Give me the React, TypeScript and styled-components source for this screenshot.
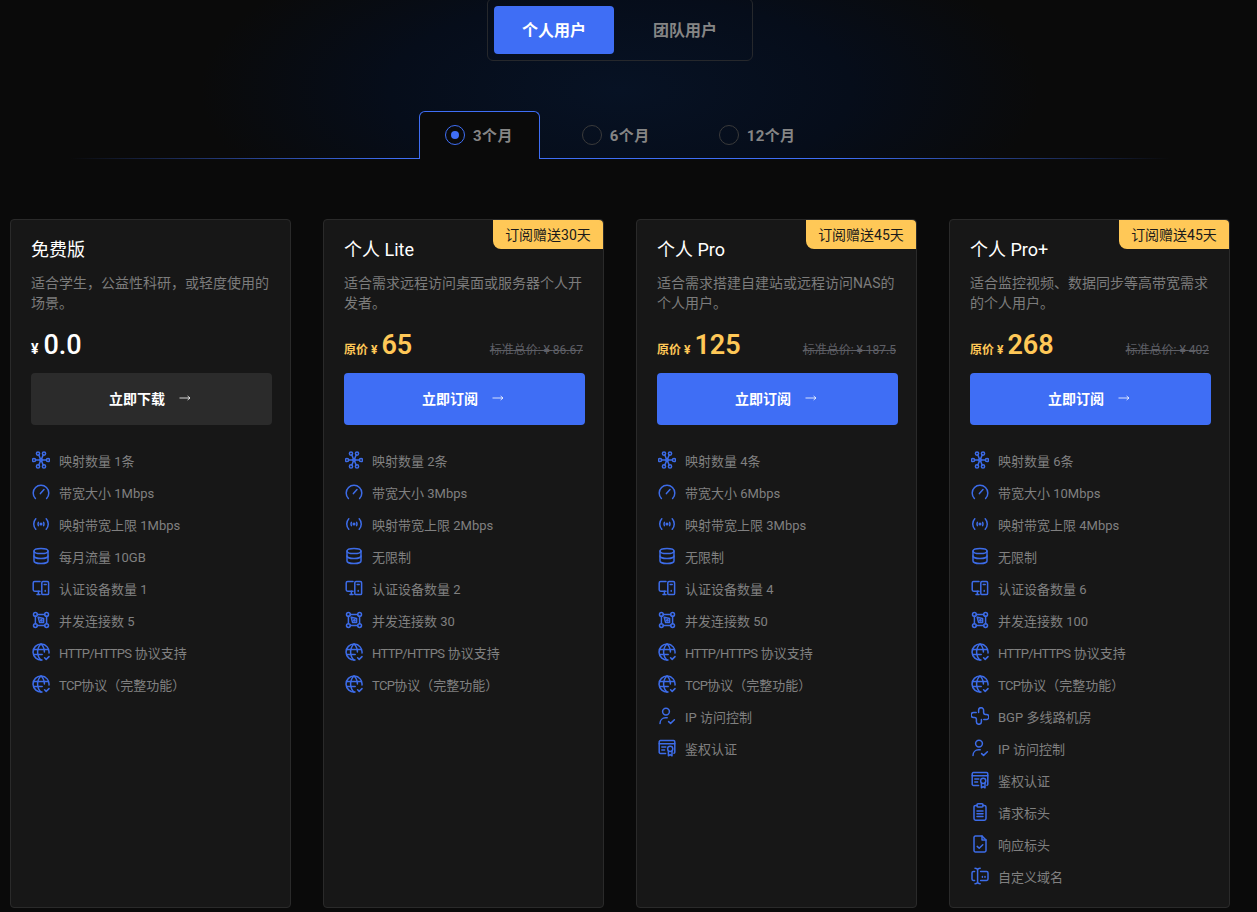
import React, { useState } from 'react';
import styled, { createGlobalStyle } from 'styled-components';

const BLUE = '#3f6ef5';
const ICON = '#3d6ce8';
const GOLD = '#ffc857';
const FONT = '"Roboto", "Noto Sans CJK SC", sans-serif';

const GlobalStyle = createGlobalStyle`
  * { box-sizing: border-box; }
  html, body { margin: 0; padding: 0; background: #0a0a0a; }
  body {
    font-family: ${FONT};
    overflow: hidden;
  }
`;

type IconName = 'nodes' | 'gauge' | 'signal' | 'db' | 'devices' | 'square' | 'globe' | 'cross' | 'user' | 'cert' | 'clip' | 'file' | 'cursor';

const paths: Record<IconName, React.ReactNode> = {
  nodes: (
    <>
      <circle cx="6" cy="2.6" r="1.6" /><circle cx="12" cy="2.6" r="1.6" />
      <circle cx="2" cy="9" r="1.6" /><circle cx="16" cy="9" r="1.6" />
      <circle cx="6" cy="15.4" r="1.6" /><circle cx="12" cy="15.4" r="1.6" />
      <circle cx="9" cy="9" r="1.2" />
      <path d="M6.8 4 8.4 7.8M11.2 4 9.6 7.8M3.6 9h4.2M14.4 9h-4.2M6.8 14 8.4 10.2M11.2 14 9.6 10.2" />
    </>
  ),
  gauge: (
    <>
      <path d="M3.4 15.4A7.8 7.8 0 1 1 14.6 15.4" />
      <path d="M8.4 10.6 12 6.6" />
    </>
  ),
  signal: (
    <>
      <circle cx="9" cy="9" r="0.8" fill={ICON} />
      <path d="M6.4 7.4a3.4 3.4 0 0 0 0 3.2M11.6 7.4a3.4 3.4 0 0 1 0 3.2" />
      <path d="M3.8 3.8a7.6 7.6 0 0 0 0 10.4M14.2 3.8a7.6 7.6 0 0 1 0 10.4" />
    </>
  ),
  db: (
    <>
      <ellipse cx="9" cy="4" rx="7" ry="2.6" />
      <path d="M2 4v10c0 1.4 3.1 2.6 7 2.6s7-1.2 7-2.6V4" />
      <path d="M2 9c0 1.4 3.1 2.6 7 2.6s7-1.2 7-2.6" />
    </>
  ),
  devices: (
    <>
      <path d="M8 2.6H2.6a1.4 1.4 0 0 0-1.4 1.4v6.8a1.4 1.4 0 0 0 1.4 1.4H8" />
      <path d="M5 15.6h3M6.4 12.2v3.4" />
      <rect x="9.8" y="2.6" width="6.8" height="13" rx="1.2" />
      <path d="M13.2 11.4v.8M12.2 5.6h2" />
    </>
  ),
  square: (
    <>
      <circle cx="3.4" cy="3.4" r="1.9" /><circle cx="14.6" cy="3.4" r="1.9" />
      <circle cx="3.4" cy="14.6" r="1.9" /><circle cx="14.6" cy="14.6" r="1.9" />
      <path d="M5.3 3.4h7.4M5.3 14.6h7.4M3.4 5.3v7.4M14.6 5.3v7.4" />
      <path d="M6.2 6.2 11.6 7.6 11.6 11.6 7.6 11.6Z" />
      <circle cx="9.4" cy="9.4" r="0.7" />
    </>
  ),
  globe: (
    <>
      <path d="M17 10A8 8 0 1 0 10 17" />
      <path d="M1.6 6.4h14.8M1.6 11.4h8.6" />
      <path d="M9 1C6.6 3.2 5.6 6 5.6 9c0 3 1 5.8 3.4 8M9 1c2.4 2.2 3.4 5 3.4 8" />
      <path d="m12.6 14.8 1.6 1.6 2.8-2.8" />
    </>
  ),
  cross: (
    <>
      <path d="M7.6 5.6V3.2a2.5 2.5 0 0 1 5 0v2.4c0 1.2.6 1.8 1.8 1.8h1a2.5 2.5 0 0 1 0 5H12.8" />
      <path d="M10.4 12.4v2.4a2.5 2.5 0 0 1-5 0v-2.4c0-1.2-.6-1.8-1.8-1.8h-1a2.5 2.5 0 0 1 0-5H5.2" />
    </>
  ),
  user: (
    <>
      <circle cx="8" cy="4.6" r="3.4" />
      <path d="M2 16.6c0-3.4 2.4-5.8 5.6-5.8h1.6" />
      <path d="m10.6 14.6 2 1.8 3.8-3.6" />
    </>
  ),
  cert: (
    <>
      <path d="M7.6 14.4H2.4a1.2 1.2 0 0 1-1.2-1.2V2.8a1.2 1.2 0 0 1 1.2-1.2h13.2a1.2 1.2 0 0 1 1.2 1.2v10.4a1.2 1.2 0 0 1-.8 1.1" />
      <path d="M1.2 4.8h15.6M3.8 8h4M3.8 11h2.8" />
      <circle cx="12.2" cy="9.8" r="2.6" />
      <path d="M10.4 12v4.8l1.8-1.2 1.8 1.2V12" />
    </>
  ),
  clip: (
    <>
      <rect x="6" y="0.8" width="6" height="3.2" rx="1" />
      <path d="M12 2.4h1.4A1.6 1.6 0 0 1 15 4v11.6a1.6 1.6 0 0 1-1.6 1.6H4.6A1.6 1.6 0 0 1 3 15.6V4a1.6 1.6 0 0 1 1.6-1.6H6" />
      <path d="M6 8h6M6 10.8h6M6 13.6h6" />
    </>
  ),
  file: (
    <>
      <path d="M11 1H4.4A1.4 1.4 0 0 0 3 2.4v13.2A1.4 1.4 0 0 0 4.4 17h9.2a1.4 1.4 0 0 0 1.4-1.4V5z" />
      <path d="M11 1v4h4" />
      <path d="m6.2 11.4 2 1.8 3.6-3.4" />
    </>
  ),
  cursor: (
    <>
      <path d="M3.6 4.6H2.4A1.4 1.4 0 0 0 1 6v6a1.4 1.4 0 0 0 1.4 1.4h1.2" />
      <path d="M9.6 4.6h6A1.4 1.4 0 0 1 17 6v6a1.4 1.4 0 0 1-1.4 1.4h-6" />
      <path d="M4 1.2c1.6 0 2.6.8 2.6 2v11.6c0 1.2-1 2-2.6 2M9.2 1.2c-1.6 0-2.6.8-2.6 2M9.2 16.8c-1.6 0-2.6-.8-2.6-2" />
      <path d="M11.4 9.6v.6M14 9.6v.6" />
    </>
  ),
};

function FeatureIcon({ name }: { name: IconName }) {
  return <IconSvg viewBox="0 0 18 18">{paths[name]}</IconSvg>;
}

type Feature = { icon: IconName; text: string; proto?: string };

const base = (n: string, bw: string, cap: string, traffic: string, dev: string, conn: string): Feature[] => [
  { icon: 'nodes', text: `映射数量 ${n}条` },
  { icon: 'gauge', text: `带宽大小 ${bw}Mbps` },
  { icon: 'signal', text: `映射带宽上限 ${cap}Mbps` },
  { icon: 'db', text: traffic },
  { icon: 'devices', text: `认证设备数量 ${dev}` },
  { icon: 'square', text: `并发连接数 ${conn}` },
  { icon: 'globe', proto: 'HTTP/HTTPS', text: ' 协议支持' },
  { icon: 'globe', proto: 'TCP', text: '协议（完整功能）' },
];

const plans = [
  {
    title: '免费版',
    desc: '适合学生，公益性科研，或轻度使用的场景。',
    price: '0.0',
    cta: '立即下载',
    features: base('1', '1', '1', '每月流量 10GB', '1', '5'),
  },
  {
    title: '个人 Lite',
    badge: '订阅赠送30天',
    desc: '适合需求远程访问桌面或服务器个人开发者。',
    price: '65',
    list: '86.67',
    cta: '立即订阅',
    features: base('2', '3', '2', '无限制', '2', '30'),
  },
  {
    title: '个人 Pro',
    badge: '订阅赠送45天',
    desc: '适合需求搭建自建站或远程访问NAS的个人用户。',
    price: '125',
    list: '187.5',
    cta: '立即订阅',
    features: [
      ...base('4', '6', '3', '无限制', '4', '50'),
      { icon: 'user', text: 'IP 访问控制' },
      { icon: 'cert', text: '鉴权认证' },
    ] as Feature[],
  },
  {
    title: '个人 Pro+',
    badge: '订阅赠送45天',
    desc: '适合监控视频、数据同步等高带宽需求的个人用户。',
    price: '268',
    list: '402',
    cta: '立即订阅',
    features: [
      ...base('6', '10', '4', '无限制', '6', '100'),
      { icon: 'cross', text: 'BGP 多线路机房' },
      { icon: 'user', text: 'IP 访问控制' },
      { icon: 'cert', text: '鉴权认证' },
      { icon: 'clip', text: '请求标头' },
      { icon: 'file', text: '响应标头' },
      { icon: 'cursor', text: '自定义域名' },
    ] as Feature[],
  },
];

export default function App() {
  const [group, setGroup] = useState('个人用户');
  const [term, setTerm] = useState('3个月');

  return (
    <Page>
      <GlobalStyle />
      <Hero>
        <Switcher>
          {['个人用户', '团队用户'].map((g) => (
            <SwitchButton key={g} $active={g === group} onClick={() => setGroup(g)}>{g}</SwitchButton>
          ))}
        </Switcher>
        <Tabs>
          {['3个月', '6个月', '12个月'].map((t) => (
            <Tab key={t} $active={t === term} onClick={() => setTerm(t)}>
              <Radio $active={t === term} />
              <TabLabel>{t}</TabLabel>
            </Tab>
          ))}
        </Tabs>
      </Hero>

      <Cards>
        {plans.map((p) => (
          <Card key={p.title}>
            {p.badge && <Badge>{p.badge}</Badge>}
            <Title>{p.title}</Title>
            <Desc>{p.desc}</Desc>
            <PriceRow>
              <PriceLeft>
                {p.list ? <Original>原价 ¥</Original> : <Yen>¥</Yen>}
                <Amount $free={!p.list}>{p.price}</Amount>
              </PriceLeft>
              {p.list && <ListPrice>标准总价: ¥ {p.list}</ListPrice>}
            </PriceRow>
            <Cta $free={!p.list}>
              {p.cta}
              <ArrowSvg viewBox="0 0 12 8">
                <path d="M0.5 4h10.5M8.6 2 11 4 8.6 6" />
              </ArrowSvg>
            </Cta>
            <Features>
              {p.features.map((f) => (
                <FeatureRow key={(f.proto ?? '') + f.text}>
                  <FeatureIcon name={f.icon} />
                  <span>
                    {f.proto && <Proto>{f.proto}</Proto>}
                    {f.text}
                  </span>
                </FeatureRow>
              ))}
            </Features>
          </Card>
        ))}
      </Cards>
    </Page>
  );
}

const Page = styled.div`
  width: 1257px;
  height: 912px;
  overflow: hidden;
  background: #0a0a0a;
`;

const Hero = styled.div`
  height: 159px;
  display: flex;
  flex-direction: column;
  align-items: flex-start;
  background: radial-gradient(ellipse 420px 170px at 620px 90px, #071224 0%, #060d1a 55%, #0a0a0a 100%);
  position: relative;

  &::after {
    content: '';
    position: absolute;
    left: 70px;
    width: 1100px;
    bottom: 0;
    height: 1px;
    background: linear-gradient(90deg, transparent 0%, ${BLUE} 30%, ${BLUE} 70%, transparent 100%);
  }
`;

const Switcher = styled.div`
  margin: -2px 0 0 487px;
  width: 266px;
  height: 63px;
  border: 1px solid #26282c;
  border-radius: 6px;
  padding: 7px 6px;
  display: flex;
  gap: 11px;
`;

const SwitchButton = styled.button<{ $active: boolean }>`
  width: 120px;
  height: 48px;
  border: 0;
  border-radius: 4px;
  padding: 0 0 2px;
  font: 700 16px ${FONT};
  color: ${(p) => (p.$active ? '#fff' : '#858585')};
  background: ${(p) => (p.$active ? BLUE : 'transparent')};
  cursor: pointer;
`;

const Tabs = styled.div`
  margin: 50px 0 0 419px;
  display: flex;
  gap: 16px;
  position: relative;
  z-index: 1;
`;

const Tab = styled.button<{ $active: boolean }>`
  height: 48px;
  display: flex;
  align-items: center;
  gap: 8px;
  font: 700 15px ${FONT};
  letter-spacing: 0.4px;
  color: #858585;
  background: ${(p) => (p.$active ? '#0a0a0a' : 'transparent')};
  border: 1px solid ${(p) => (p.$active ? BLUE : 'transparent')};
  border-bottom: 0;
  border-radius: 6px 6px 0 0;
  cursor: pointer;
  padding: 0 26px 1px 25px;
`;

const TabLabel = styled.span`
  margin-top: -2px;
`;

const Radio = styled.span<{ $active: boolean }>`
  width: 20px;
  height: 20px;
  border-radius: 50%;
  border: 1px solid ${(p) => (p.$active ? BLUE : '#3a3a3a')};
  display: flex;
  align-items: center;
  justify-content: center;

  &::after {
    content: '';
    width: 8px;
    height: 8px;
    border-radius: 50%;
    background: ${(p) => (p.$active ? BLUE : 'transparent')};
  }
`;

const Cards = styled.div`
  margin-top: 60px;
  padding-left: 10px;
  display: grid;
  grid-template-columns: repeat(4, 281px);
  gap: 32px;
`;

const Card = styled.div`
  position: relative;
  height: 689px;
  background: #171717;
  border: 1px solid #2a2a2a;
  border-radius: 4px;
  padding: 17px 20px;
`;

const Badge = styled.div`
  position: absolute;
  top: 0;
  right: 0;
  width: 110px;
  height: 29px;
  background: ${GOLD};
  color: #1a1a1a;
  font-size: 14px;
  line-height: 30px;
  text-align: center;
  border-radius: 0 4px 0 8px;
`;

const Title = styled.div`
  color: #fff;
  font-size: 18px;
  font-weight: 400;
  line-height: 26px;
`;

const Desc = styled.div`
  margin-top: 10px;
  height: 40px;
  color: #7c7c7c;
  font-size: 14px;
  line-height: 20px;
`;

const PriceRow = styled.div`
  margin-top: 10px;
  height: 40px;
  display: flex;
  align-items: center;
  justify-content: space-between;
`;

const PriceLeft = styled.div`
  display: flex;
  align-items: baseline;
  gap: 4px;
  padding-top: 4px;
`;

const Original = styled.span`
  color: ${GOLD};
  font-size: 12px;
  font-weight: 700;
`;

const Yen = styled.span`
  color: #fff;
  font-size: 14px;
  font-weight: 700;
  margin-right: 1px;
`;

const Amount = styled.span<{ $free: boolean }>`
  color: ${(p) => (p.$free ? '#fff' : GOLD)};
  font-size: 27px;
  font-weight: ${(p) => (p.$free ? 500 : 600)};
  line-height: 40px;
`;

const ListPrice = styled.span`
  color: #5e5f66;
  font-size: 12px;
  text-decoration: line-through;
  padding-top: 11px;
`;

const Cta = styled.button<{ $free: boolean }>`
  margin-top: 10px;
  width: 241px;
  height: 52px;
  border: 0;
  border-radius: 4px;
  background: ${(p) => (p.$free ? '#2b2b2b' : BLUE)};
  color: #fff;
  font: 700 14px ${FONT};
  display: flex;
  align-items: center;
  justify-content: center;
  gap: 14px;
  cursor: pointer;
  padding: 0 3px 2px 0;
`;

const ArrowSvg = styled.svg`
  width: 12px;
  height: 8px;
  fill: none;
  stroke: #fff;
  stroke-opacity: 0.8;
  stroke-width: 1;
`;

const Features = styled.ul`
  list-style: none;
  margin: 19px 0 0;
  padding: 0;
`;

const FeatureRow = styled.li`
  height: 32px;
  display: flex;
  align-items: center;
  gap: 9px;
  color: #808080;
  font-size: 13px;
  padding-left: 1px;
`;

const Proto = styled.span`
  letter-spacing: -0.65px;
`;

const IconSvg = styled.svg`
  width: 18px;
  height: 18px;
  flex: none;
  fill: none;
  stroke: ${ICON};
  stroke-width: 1.5;
  stroke-linecap: round;
  stroke-linejoin: round;
`;
